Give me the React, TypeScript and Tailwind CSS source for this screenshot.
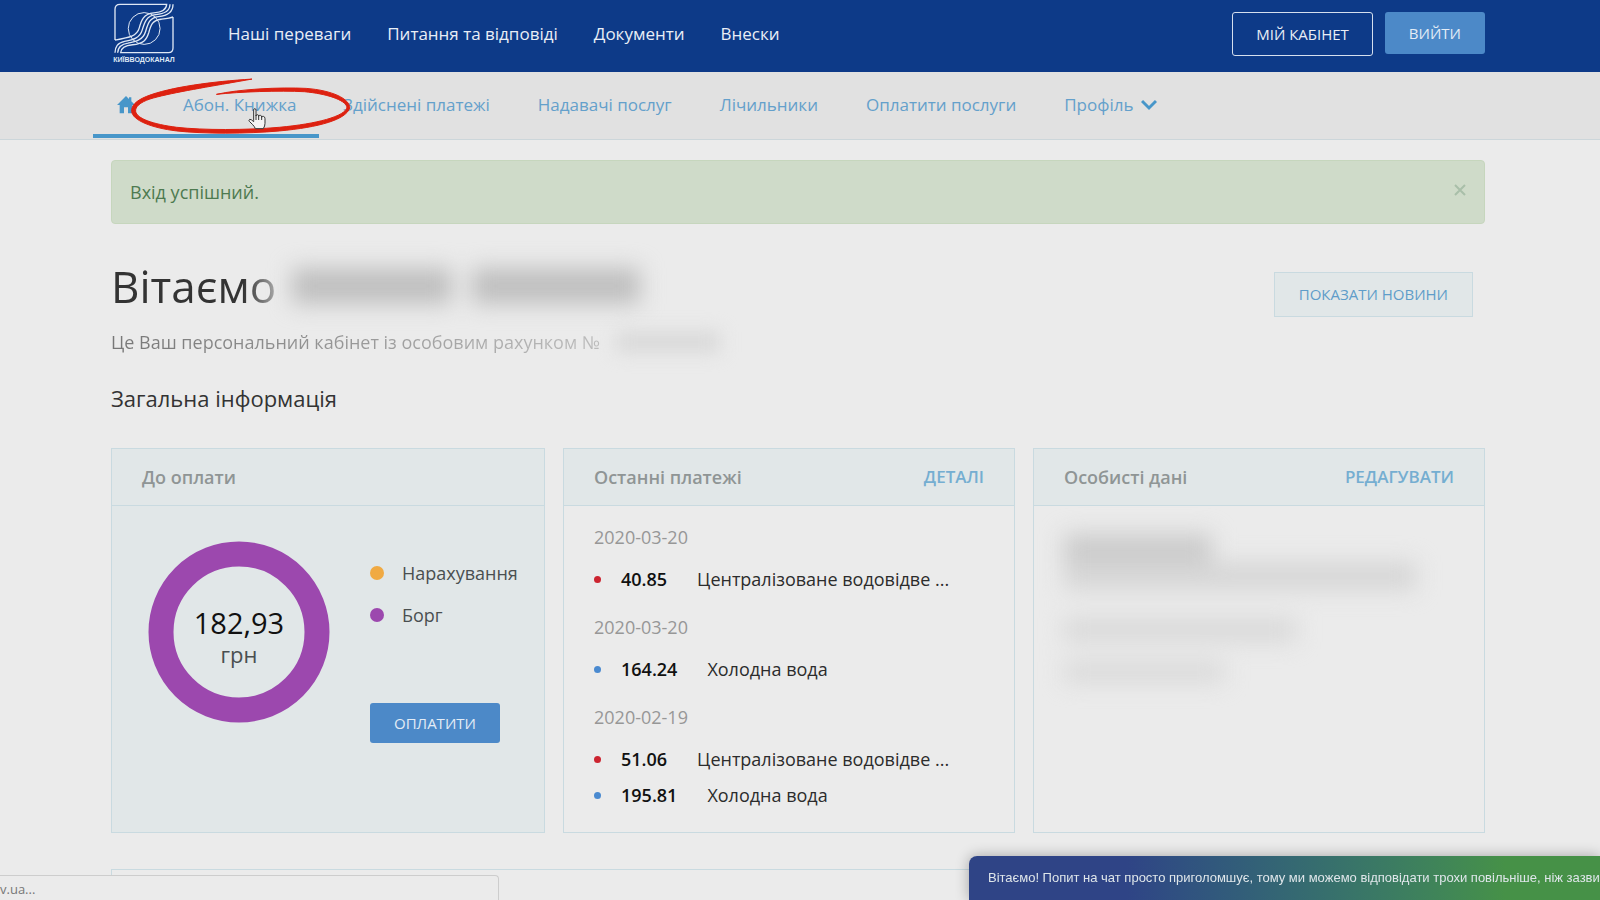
import React from 'react';

interface Payment {
  amount: string;
  title: string;
  kind: 'drain' | 'water';
}

interface PaymentGroup {
  date: string;
  items: Payment[];
}

const topLinks = ['Наші переваги', 'Питання та відповіді', 'Документи', 'Внески'];

const tabs = ['Здійснені платежі', 'Надавачі послуг', 'Лічильники', 'Оплатити послуги'];

const payments: PaymentGroup[] = [
  { date: '2020-03-20', items: [{ amount: '40.85', title: 'Централізоване водовідве ...', kind: 'drain' }] },
  { date: '2020-03-20', items: [{ amount: '164.24', title: 'Холодна вода', kind: 'water' }] },
  {
    date: '2020-02-19',
    items: [
      { amount: '51.06', title: 'Централізоване водовідве ...', kind: 'drain' },
      { amount: '195.81', title: 'Холодна вода', kind: 'water' },
    ],
  },
];

const Logo = () => (
  <a href="#" className="flex w-[60px] flex-col items-center text-[#dfe8f5]">
    <svg viewBox="102 9 181 152" className="h-[51px] w-[60px]" fill="none" stroke="currentColor" strokeWidth="4">
      <path d="M105 120V27Q105 12 120 12H261C260 29 248 36 222 38C190 41 184 62 178 84C171 108 150 112 105 120" />
      <path d="M271 12C270 34 254 41 228 43C200 46 194 66 187 90C180 114 160 119 134 124C112 129 106 140 105 158" />
      <path d="M280 12C280 38 262 47 236 49C208 52 204 72 197 95C190 119 168 125 144 129C122 132 114 142 113 158" />
      <path d="M280 50V144Q280 158 266 158H122C123 143 136 136 158 134C192 131 200 119 207 97C213 74 218 60 244 57C262 55 272 54 280 50" />
      <circle cx="193" cy="85" r="48" strokeWidth="3" />
    </svg>
    <span className="font-['Liberation_Sans',sans-serif] text-[7px] leading-[11px] font-bold">КИЇВВОДОКАНАЛ</span>
  </a>
);

const HomeIcon = () => (
  <svg viewBox="0 0 54 54" className="h-[18px] w-[18px]" fill="currentColor">
    <path d="M27 0L0 27H8V52H21V34H33V52H46V27H54L43 16V4H36V9Z" />
  </svg>
);

// Hand-drawn marker loop around the active tab
const MarkerLoop = () => (
  <svg viewBox="150 232 668 174" className="pointer-events-none absolute top-[5px] left-[37px] h-[58px] w-[222px]">
    <path
      fill="#dd2110"
      stroke="#dd2110"
      strokeWidth="3"
      strokeLinejoin="round"
      d="M517 238C400 245 270 262 200 290C165 304 154 320 155 335C157 362 215 385 290 394C370 403 500 403 600 394C720 383 800 360 811 325C812 298 760 272 680 266C600 262 480 268 410 284C480 276 600 272 675 276C740 282 797 300 803 322C800 350 710 373 600 383C500 392 370 392 290 383C220 374 170 357 167 335C165 322 180 308 210 298C260 282 380 262 460 248Z"
    />
  </svg>
);

const HandCursor = () => (
  <svg viewBox="0 0 54 66" className="pointer-events-none absolute top-9 left-[155px] h-[22px] w-[18px]">
    <path
      fill="#f4f4f4"
      stroke="#333"
      strokeWidth="3"
      strokeLinejoin="round"
      d="M17 38V6Q17 2 20 2Q24 2 24 6V24Q24 20 28 20Q32 20 32 25Q33 21 37 22Q41 22 41 28Q42 24 46 25Q51 26 51 32V46Q51 54 46 62H22Q20 56 14 50L4 40Q1 36 5 34Q9 33 17 41Z"
    />
    <path stroke="#333" strokeWidth="3" d="M24 22V36M32 24V36M41 27V36" />
  </svg>
);

interface CardProps {
  title: string;
  action?: string;
  className?: string;
  children: React.ReactNode;
}

const Card = ({ title, action, className = '', children }: CardProps) => (
  <section className={`flex min-w-0 flex-col border border-[#c9dae0] ${className}`}>
    <div className="flex h-[57px] items-center justify-between border-b border-[#c9dae0] bg-[#e1e7e8] px-[30px]">
      <h3 className="text-lg font-semibold text-[#8f9595]">{title}</h3>
      {action && (
        <a href="#" className="text-[17px] font-semibold text-[#75aed1]">
          {action}
        </a>
      )}
    </div>
    {children}
  </section>
);

export default function App() {
  return (
    <div className="flex min-h-screen flex-col overflow-hidden bg-[#ebebeb] font-['Open_Sans',sans-serif] text-[#333]">
      <header className="h-18 bg-[#0d3a88]">
        <div className="mx-auto flex max-w-[1378px] items-start pr-1">
          <div className="pt-[3px] pl-[3px]">
            <Logo />
          </div>
          <nav className="ml-[54px] flex h-[68px] items-center gap-9 text-[17px] font-medium text-[#e9eef6]">
            {topLinks.map((link) => (
              <a key={link} href="#">
                {link}
              </a>
            ))}
          </nav>
          <div className="ml-auto flex items-start gap-3 pt-3 text-[15px]">
            <button className="h-11 rounded-[3px] border border-[#d5dfee] px-[23px] text-[#e9eef6]">МІЙ КАБІНЕТ</button>
            <button className="h-[42px] rounded-[3px] bg-[#4c89c8] px-6 text-[#e3ecf6]">ВИЙТИ</button>
          </div>
        </div>
      </header>

      <div className="h-17 border-b border-[#ccd6da] bg-[#e1e1e1]">
        <div className="mx-auto flex h-full max-w-[1414px] text-[17px] text-[#64a0cb]">
          <div className="relative flex h-[66px] w-[226px] items-center border-b-4 border-[#4796c9] pt-1 pl-6">
            <a href="#" aria-label="Головна" className="text-[#4796c9]">
              <HomeIcon />
            </a>
            <a href="#" className="ml-12">
              Абон. Книжка
            </a>
            <MarkerLoop />
            <HandCursor />
          </div>
          <nav className="ml-6 flex h-[66px] items-center gap-12">
            {tabs.map((tab) => (
              <a key={tab} href="#">
                {tab}
              </a>
            ))}
            <button className="flex items-center gap-2">
              Профіль
              <svg viewBox="0 0 16 12" className="h-3 w-4 text-[#4796c9]" fill="none" stroke="currentColor" strokeWidth="3">
                <path d="M1 2L8 9L15 2" />
              </svg>
            </button>
          </nav>
        </div>
      </div>

      <main className="mx-auto flex w-full max-w-[1378px] flex-1 flex-col pt-5 pr-1">
        <div className="flex h-16 items-center justify-between rounded border border-[#c6d6bd] bg-[#cfdbc9] px-[18px] text-lg text-[#4d7a50]">
          <span>Вхід успішний.</span>
          <button aria-label="Закрити" className="pb-1 text-[#a9bfa9]">
            <svg viewBox="0 0 12 12" className="h-3 w-3" stroke="currentColor" strokeWidth="2">
              <path d="M1 1L11 11M11 1L1 11" />
            </svg>
          </button>
        </div>

        <div className="mt-[30px] flex items-start justify-between pr-3">
          <div>
            <div className="flex items-center gap-4">
              <h1 className="bg-linear-to-r from-[#333] from-80% to-[#aaa] bg-clip-text text-[44px] leading-[64px] text-transparent">
                Вітаємо
              </h1>
              <div className="flex items-center gap-5 blur-[11px]">
                <span className="h-9 w-40 bg-[#bfbfbf]" />
                <span className="h-9 w-42 bg-[#bfbfbf]" />
              </div>
            </div>
            <div className="mt-2.5 flex items-center text-lg">
              <p className="bg-linear-to-r from-[#777] to-[#bcbcbc] bg-clip-text text-transparent">
                Це Ваш персональний кабінет із особовим рахунком №
              </p>
              <span className="ml-4 h-5 w-26 bg-[#d8d8d8] blur-[9px]" />
            </div>
          </div>
          <button className="mt-[18px] h-[45px] border border-[#c9dae0] bg-[#e1e7e8] px-6 text-[15px] text-[#5f9dc9]">
            ПОКАЗАТИ НОВИНИ
          </button>
        </div>

        <h2 className="mt-[26px] text-[22px] leading-8">Загальна інформація</h2>

        <div className="mt-[34px] grid min-h-[385px] grid-cols-[434fr_452fr_452fr] gap-[18px]">
          <Card title="До оплати" className="bg-[#e1e7e8]">
            <div className="flex gap-10 pt-[35px] pl-9">
              <div className="relative h-[182px] w-[182px] shrink-0">
                <svg viewBox="0 0 182 182" className="h-full w-full">
                  <circle cx="91" cy="91" r="78" fill="none" stroke="#9c48ae" strokeWidth="25" />
                </svg>
                <div className="absolute inset-0 flex flex-col items-center justify-center pt-3">
                  <span className="text-[29px] leading-8 text-[#111]">182,93</span>
                  <span className="text-[22px] leading-[30px] text-[#4a4f50]">грн</span>
                </div>
              </div>
              <div className="flex flex-col items-start pt-[18px]">
                <ul className="text-lg text-[#4a4f50]">
                  <li className="flex items-center gap-[18px]">
                    <span className="h-3.5 w-3.5 rounded-full bg-[#f0aa43]" />
                    Нарахування
                  </li>
                  <li className="mt-[14px] flex items-center gap-[18px]">
                    <span className="h-3.5 w-3.5 rounded-full bg-[#9c48ae]" />
                    Борг
                  </li>
                </ul>
                <button className="mt-[74px] h-10 rounded-[3px] bg-[#4c89c8] px-6 text-[15px] text-[#e3ecf6]">ОПЛАТИТИ</button>
              </div>
            </div>
          </Card>

          <Card title="Останні платежі" action="ДЕТАЛІ">
            <div className="px-[30px] pt-[15px] text-lg">
              {payments.map((group, i) => (
                <div key={i} className="mb-3.5 last:mb-0">
                  <div className="mb-2 leading-8 text-[#979797]">{group.date}</div>
                  {group.items.map((item) => (
                    <div key={item.title} className="flex h-9 items-center">
                      <span
                        className={`mr-5 h-[7px] w-[7px] shrink-0 rounded-full ${item.kind === 'drain' ? 'bg-[#cc2430]' : 'bg-[#4a8ad0]'}`}
                      />
                      <span className="mr-[30px] font-semibold text-[#111]">{item.amount}</span>
                      <span className="truncate text-[#2c2c2c]">{item.title}</span>
                    </div>
                  ))}
                </div>
              ))}
            </div>
          </Card>

          <Card title="Особисті дані" action="РЕДАГУВАТИ">
            <div className="flex flex-col items-start px-[30px] pt-7 blur-[11px]">
              <span className="h-7 w-37 bg-[#cbcbcb]" />
              <span className="h-7 w-88 bg-[#d6d6d6]" />
              <span className="mt-7 h-6 w-58 bg-[#d9d9d9]" />
              <span className="mt-5 h-5 w-40 bg-[#d9d9d9]" />
            </div>
          </Card>
        </div>

        <section className="mt-9 min-h-[30px] flex-1 border border-b-0 border-[#c9dae0]" />
      </main>

      <div className="fixed bottom-0 left-0 h-[25px] w-[499px] rounded-tr border-t border-r border-[#cdcdcd] bg-[#ebebeb] text-[13px] leading-[27px] text-[#777]">
        v.ua...
      </div>

      <div className="fixed right-0 bottom-0 flex h-11 w-[631px] items-center overflow-hidden rounded-tl-lg bg-linear-to-r from-[#2f4486] from-25% to-[#469147] to-85% pl-[19px] font-['Liberation_Sans',sans-serif] text-[13px] whitespace-nowrap text-[#dfe6ea] shadow-[0_0_14px_rgba(0,0,0,0.3)]">
        Вітаємо! Попит на чат просто приголомшує, тому ми можемо відповідати трохи повільніше, ніж зазвичай
      </div>
    </div>
  );
}
